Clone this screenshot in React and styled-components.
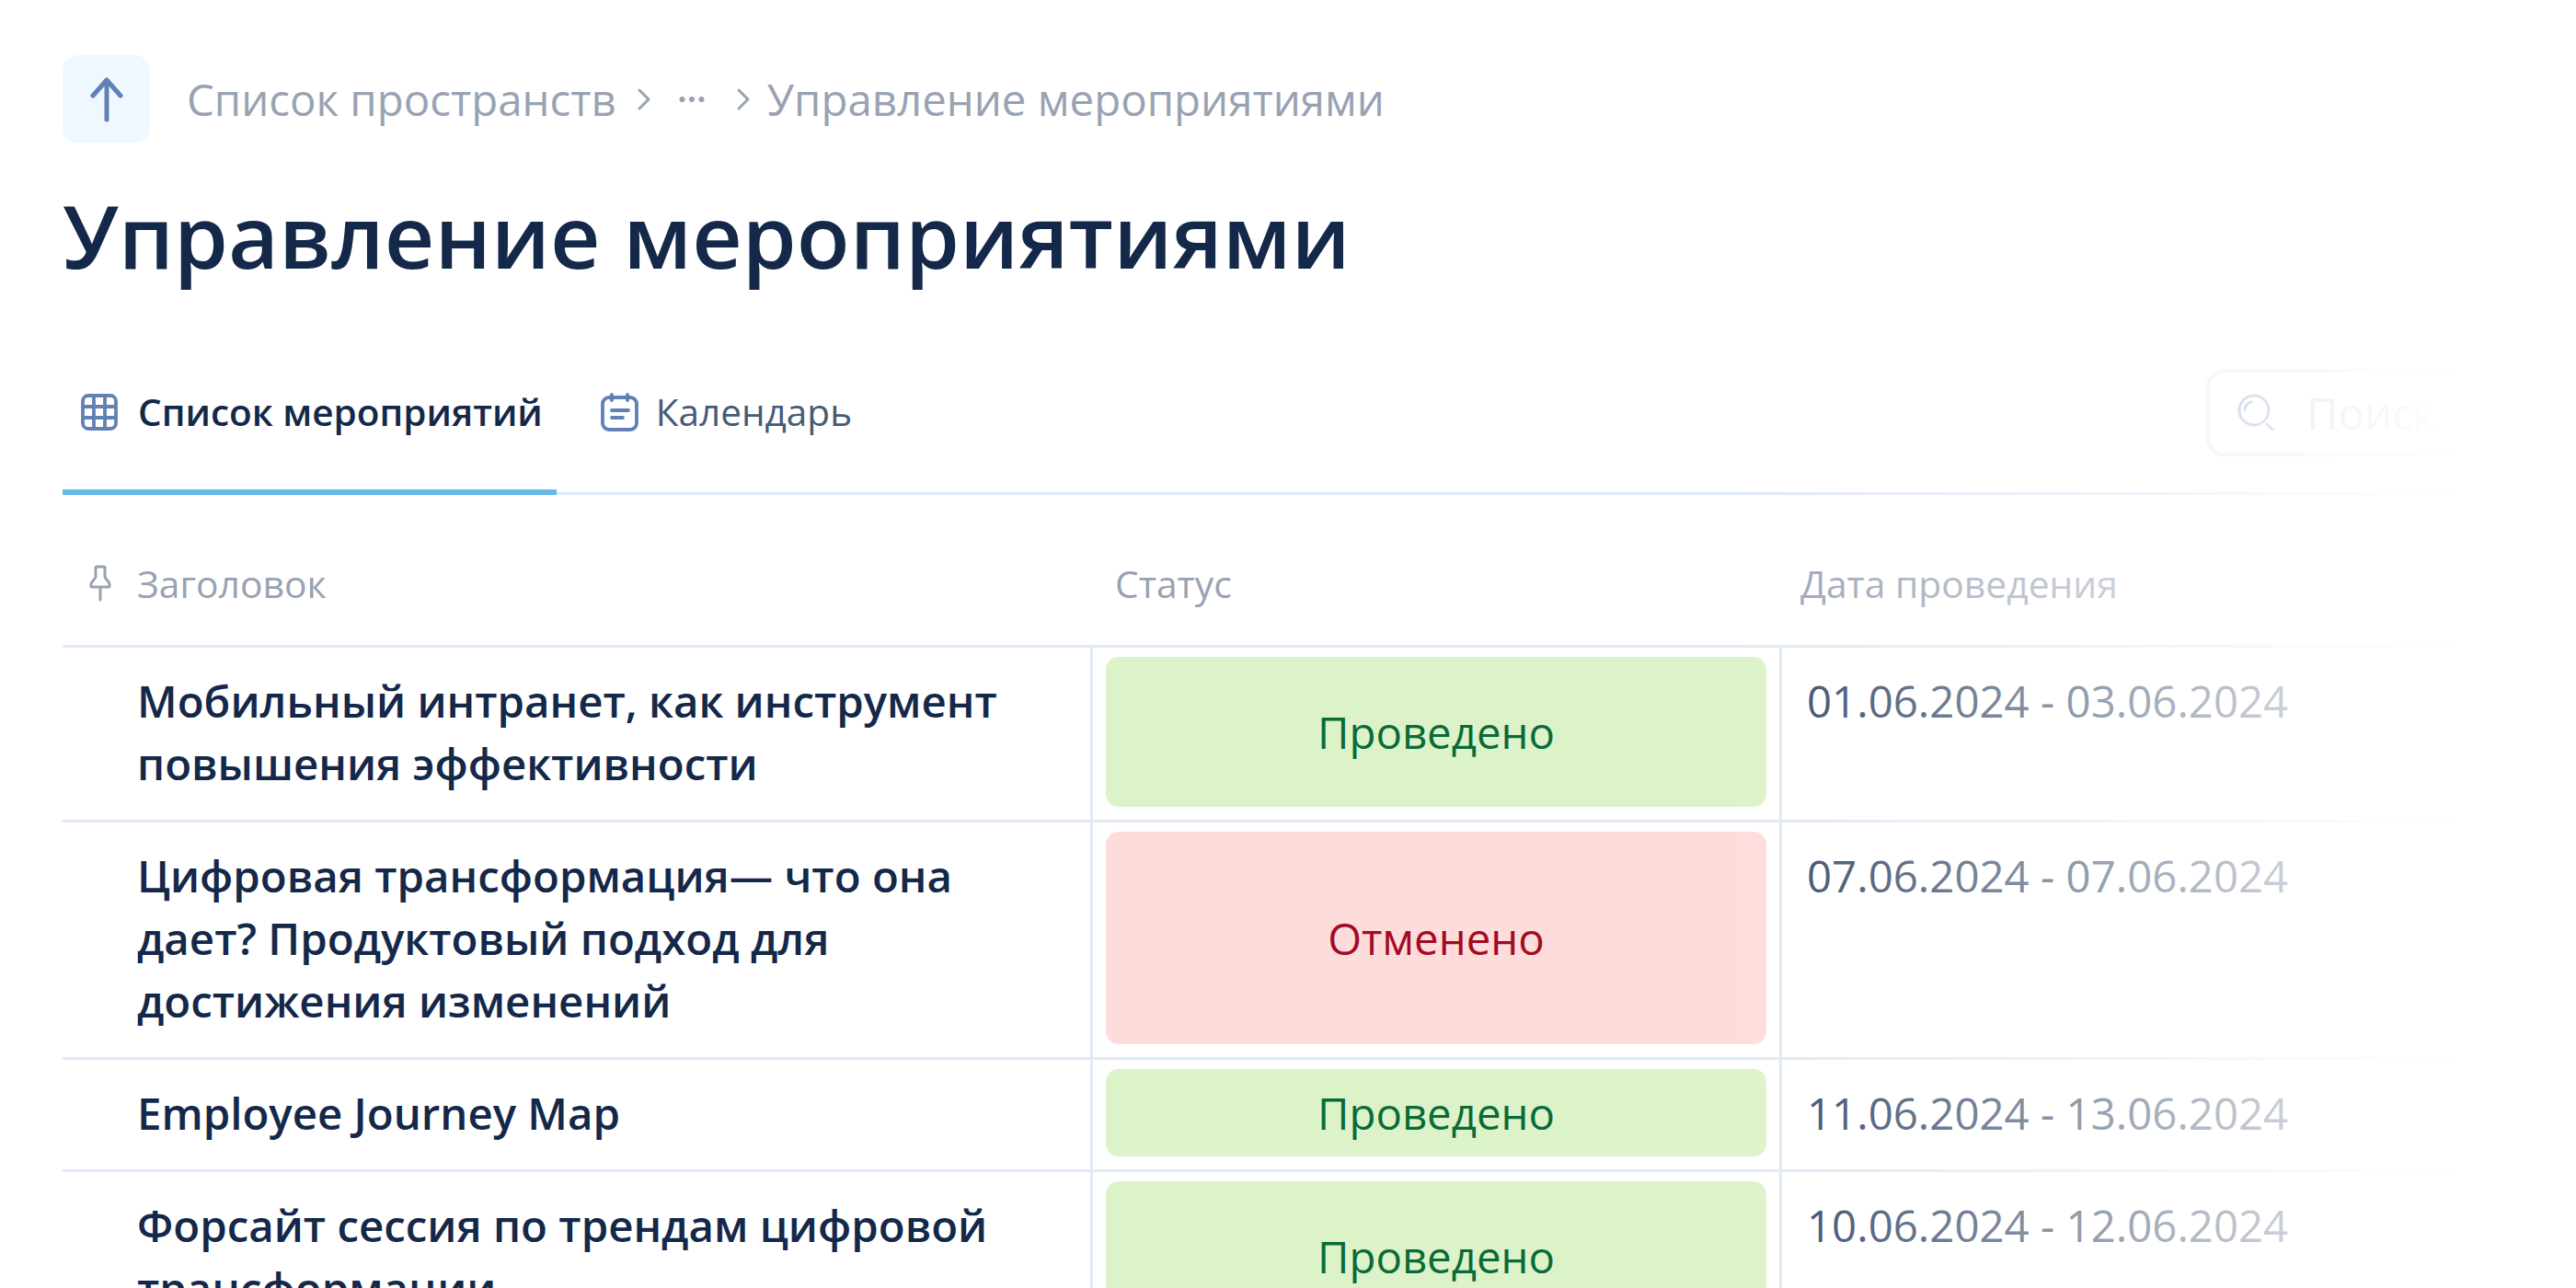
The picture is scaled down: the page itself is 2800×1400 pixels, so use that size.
import React from 'react';
import styled, { createGlobalStyle } from 'styled-components';
import { Ellipsis } from 'lucide-react';

const GlobalStyle = createGlobalStyle`
  html, body {
    margin: 0;
    padding: 0;
    background: #fff;
    font-family: "Open Sans", "Noto Sans", sans-serif;
  }
`;

const Page = styled.div`
  position: relative;
  width: 2800px;
  height: 1400px;
  overflow: hidden;
  box-sizing: border-box;
  padding: 60px 0 0 68px;
`;

// white veil over the right side of the page
const Fade = styled.div`
  position: absolute;
  top: 0;
  right: 0;
  bottom: 0;
  width: 920px;
  pointer-events: none;
  background: linear-gradient(90deg, rgba(255, 255, 255, 0), rgba(255, 255, 255, 0.48) 400px, #fff 800px);
`;

const Crumbs = styled.nav`
  display: flex;
  align-items: center;
  height: 95px;
  color: #98a2b3;
  font-size: 47.4px;
`;

const BackButton = styled.div`
  width: 95px;
  height: 95px;
  border-radius: 16px;
  background: #eff8ff;
  color: #6180b4;
  display: flex;
  align-items: center;
  justify-content: center;
  margin-right: 40px;
`;

const Chevron = styled.svg`
  flex: none;
  margin-left: ${(p) => p.$left}px;
  margin-right: ${(p) => p.$right}px;
`;

const Dots = styled(Ellipsis)`
  flex: none;
  margin-left: 27px;
`;

const Title = styled.h1`
  margin: 43px 0 0;
  font-size: 94.8px;
  line-height: 116px;
  font-weight: 600;
  color: #142849;
`;

const TabBar = styled.div`
  display: flex;
  align-items: center;
  justify-content: space-between;
  box-sizing: border-box;
  margin-top: 47px;
  height: 177px;
  width: 2732px;
  border-bottom: 3px solid #dfe8f6;
`;

const Tabs = styled.div`
  display: flex;
  height: 100%;
`;

const Tab = styled.div`
  display: flex;
  align-items: center;
  gap: ${(p) => (p.$active ? 22 : 19)}px;
  padding: 2px 15px 0 20px;
  margin-right: 28px;
  margin-bottom: -3px;
  font-size: 40.5px;
  font-weight: ${(p) => (p.$active ? 600 : 400)};
  color: ${(p) => (p.$active ? '#142849' : '#475a78')};
  border-bottom: 6px solid ${(p) => (p.$active ? '#63bae4' : 'transparent')};
`;

const TabIcon = styled.svg`
  flex: none;
  color: #6180b4;
`;

const SearchBox = styled.div`
  width: 402px;
  height: 95px;
  box-sizing: border-box;
  border: 4px solid #dfe8f6;
  border-radius: 20px;
  display: flex;
  align-items: center;
  gap: 35px;
  padding-left: 30px;
  font-size: 47.4px;
  color: #c0c7d2;
`;

const SearchIcon = styled.svg`
  flex: none;
  color: #8aa0c6;
`;

const Table = styled.div`
  width: 2732px;
`;

const Row = styled.div`
  display: grid;
  grid-template-columns: 1117px 752px 1fr;
  border-bottom: 3px solid #dfe8f6;
`;

const HeadCell = styled.div`
  display: flex;
  align-items: center;
  gap: 28px;
  height: 163px;
  box-sizing: border-box;
  padding-top: 28px;
  padding-left: ${(p) => p.$pad}px;
  font-size: 40.8px;
  color: #98a2b3;
`;

const PinIcon = styled.svg`
  flex: none;
`;

const TitleCell = styled.div`
  padding: 24px 60px 27px 81px;
  font-size: 47.4px;
  line-height: 68px;
  font-weight: 600;
  color: #142849;
`;

const StatusCell = styled.div`
  border-left: 3px solid #dfe8f6;
  border-right: 3px solid #dfe8f6;
  padding: 10px 14px 14px;
  display: flex;
`;

const Status = styled.div`
  flex: 1;
  display: flex;
  align-items: center;
  justify-content: center;
  border-radius: 14px;
  font-size: 47.4px;
  background: ${(p) => (p.$tone === 'red' ? '#fedcdb' : '#dcf3ca')};
  color: ${(p) => (p.$tone === 'red' ? '#a30a24' : '#0a6b36')};
`;

const DateCell = styled.div`
  padding: 24px 0 0 27px;
  font-size: 47.4px;
  line-height: 68px;
  color: #344868;
`;

const rows = [
  { title: ['Мобильный интранет, как инструмент', 'повышения эффективности'], status: 'Проведено', date: '01.06.2024 - 03.06.2024' },
  { title: ['Цифровая трансформация— что она', 'дает? Продуктовый подход для', 'достижения изменений'], status: 'Отменено', tone: 'red', date: '07.06.2024 - 07.06.2024' },
  { title: ['Employee Journey Map'], status: 'Проведено', date: '11.06.2024 - 13.06.2024' },
  { title: ['Форсайт сессия по трендам цифровой', 'трансформации'], status: 'Проведено', date: '10.06.2024 - 12.06.2024' },
];

function ChevronIcon({ left, right = 0 }) {
  return (
    <Chevron $left={left} $right={right} width="14" height="24" viewBox="0 0 14 24" fill="none" stroke="currentColor" strokeWidth="3" strokeLinecap="round" strokeLinejoin="round">
      <path d="M2 2l10 10L2 22" />
    </Chevron>
  );
}

function ArrowIcon() {
  return (
    <svg width="36" height="50" viewBox="0 0 36 50" fill="none" stroke="currentColor" strokeWidth="5" strokeLinecap="round" strokeLinejoin="round">
      <path d="M18 47V4M3 21L18 4l15 17" />
    </svg>
  );
}

function GridIcon() {
  return (
    <TabIcon width="40" height="40" viewBox="0 0 40 40" fill="none" stroke="currentColor" strokeWidth="3.8">
      <rect x="2" y="2" width="36" height="36" rx="6" />
      <path d="M14 2v36M26 2v36M2 14h36M2 26h36" />
    </TabIcon>
  );
}

function CalendarIcon() {
  return (
    <TabIcon width="41" height="42" viewBox="0 0 41 42" fill="none" stroke="currentColor" strokeWidth="3.8" strokeLinecap="round">
      <rect x="2" y="5" width="37" height="35" rx="7" />
      <path d="M12 2v6M29 2v6M12 19h18M12 27h12" />
    </TabIcon>
  );
}

function LoupeIcon() {
  return (
    <SearchIcon width="40" height="40" viewBox="0 0 40 40" fill="none" stroke="currentColor" strokeWidth="3" strokeLinecap="round">
      <circle cx="18" cy="18" r="16" />
      <path d="M8 17c.5-4 3-7 7-8M32 33l6 6" />
    </SearchIcon>
  );
}

function PinGlyph() {
  return (
    <PinIcon width="24" height="40" viewBox="0 0 24 40" fill="none" stroke="#98a2b3" strokeWidth="3" strokeLinecap="round" strokeLinejoin="round">
      <path d="M8 2h8a1 1 0 0 1 1 1v10c0 2 5 5 5 8v2a1 1 0 0 1-1 1H3a1 1 0 0 1-1-1v-2c0-3 5-6 5-8V3a1 1 0 0 1 1-1zM12 24v14" />
    </PinIcon>
  );
}

export default function App() {
  return (
    <Page>
      <GlobalStyle />
      <Crumbs>
        <BackButton><ArrowIcon /></BackButton>
        <span>Список пространств</span>
        <ChevronIcon left={23} />
        <Dots size={36} strokeWidth={2} />
        <ChevronIcon left={31} right={19} />
        <span>Управление мероприятиями</span>
      </Crumbs>
      <Title>Управление мероприятиями</Title>
      <TabBar>
        <Tabs>
          <Tab $active><GridIcon />Список мероприятий</Tab>
          <Tab><CalendarIcon />Календарь</Tab>
        </Tabs>
        <SearchBox><LoupeIcon />Поиск</SearchBox>
      </TabBar>
      <Table>
        <Row>
          <HeadCell $pad={29}><PinGlyph />Заголовок</HeadCell>
          <HeadCell $pad={27}>Статус</HeadCell>
          <HeadCell $pad={20}>Дата проведения</HeadCell>
        </Row>
        {rows.map((r) => (
          <Row key={r.date}>
            <TitleCell>{r.title.map((t) => <div key={t}>{t}</div>)}</TitleCell>
            <StatusCell><Status $tone={r.tone}>{r.status}</Status></StatusCell>
            <DateCell>{r.date}</DateCell>
          </Row>
        ))}
      </Table>
      <Fade />
    </Page>
  );
}
